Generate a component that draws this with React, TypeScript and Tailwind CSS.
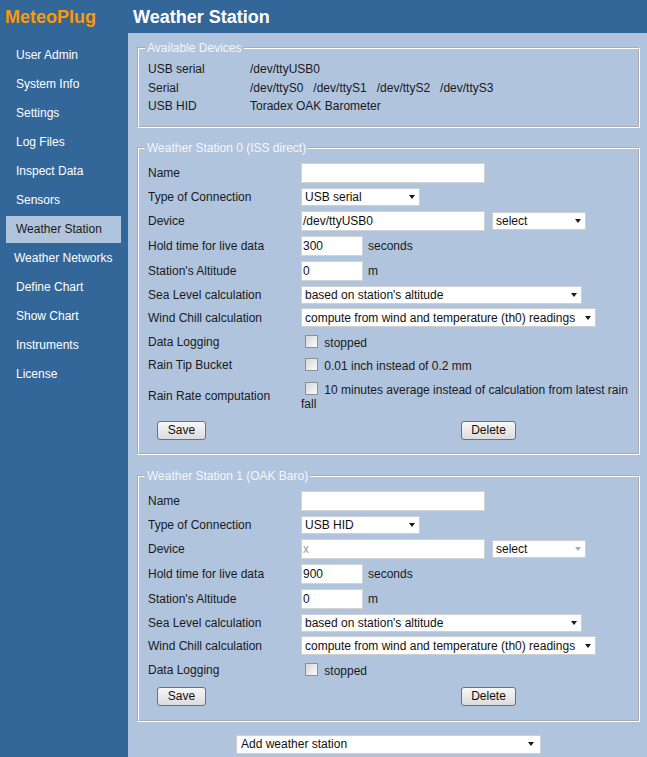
import React from "react";

const NAV = [
  "User Admin",
  "System Info",
  "Settings",
  "Log Files",
  "Inspect Data",
  "Sensors",
  "Weather Station",
  "Weather Networks",
  "Define Chart",
  "Show Chart",
  "Instruments",
  "License",
];

function Select({
  value,
  className,
  disabled,
}: {
  value: string;
  className: string;
  disabled?: boolean;
}) {
  return (
    <div
      className={`flex items-center justify-between bg-white border border-[#cfcfcf] pl-[3px] pr-[4px] ${className}`}
    >
      <span className="text-[12px] leading-[14px] text-[#111] whitespace-nowrap">{value}</span>
      <span
        className={`w-0 h-0 border-l-[3.5px] border-r-[3.5px] border-t-[4px] border-l-transparent border-r-transparent ${
          disabled ? "border-t-[#a9a9a9]" : "border-t-[#1a1a1a]"
        }`}
      />
    </div>
  );
}

function Input({
  value,
  className,
  placeholder,
}: {
  value?: string;
  className: string;
  placeholder?: string;
}) {
  return (
    <div
      className={`h-[20px] flex items-center bg-white border border-[#d3d3d3] pl-[1px] text-[12px] leading-[14px] ${className}`}
    >
      {value ? (
        <span className="text-[#111]">{value}</span>
      ) : placeholder ? (
        <span className="text-[#9a9a9a]">{placeholder}</span>
      ) : null}
    </div>
  );
}

function Checkbox() {
  return (
    <span className="inline-block w-[13px] h-[13px] ml-[4px] mr-[3px] [vertical-align:-1px] border border-[#8e8e8e] bg-linear-to-br from-[#d6d6d6] to-[#fcfcfc]" />
  );
}

function Button({ label, className }: { label: string; className: string }) {
  return (
    <button
      className={`h-[19px] flex items-center justify-center border border-[#707070] rounded-[3px] bg-linear-to-b from-[#f7f7f7] to-[#dcdcdc] text-[12px] leading-[14px] text-[#111] ${className}`}
    >
      {label}
    </button>
  );
}

function Row({
  label,
  h,
  children,
}: {
  label: string;
  h: string;
  children?: React.ReactNode;
}) {
  return (
    <div className={`flex items-center ${h}`}>
      <div className="w-[153px] shrink-0 text-[12px] leading-[14px] text-[#1a1a1a]">{label}</div>
      <div className="flex-1 flex items-center">{children}</div>
    </div>
  );
}

function Station({
  title,
  type,
  device,
  devicePlaceholder,
  selectDisabled,
  hold,
  rain,
  last,
}: {
  title: string;
  type: string;
  device?: string;
  devicePlaceholder?: string;
  selectDisabled?: boolean;
  hold: string;
  rain?: boolean;
  last?: boolean;
}) {
  return (
    <fieldset
      className={`border-2 [border-style:groove] border-white px-[6px] ${last ? "mt-[14px]" : "mt-[13px]"}`}
    >
      <legend className="px-[2px] text-[12px] leading-[14px] text-[#f4f7fb]">{title}</legend>
      <div className={`pl-[3px] pt-[6px] ${last ? "pb-[11px]" : "pb-[10px]"}`}>
        <Row label="Name" h="h-[24px]">
          <Input className="w-[184px]" />
        </Row>
        <Row label="Type of Connection" h="h-[24px]">
          <Select value={type} className="w-[119px] h-[18px]" />
        </Row>
        <Row label="Device" h="h-[24px]">
          <Input className="w-[184px]" value={device} placeholder={devicePlaceholder} />
          <Select value="select" className="ml-[7px] w-[94px] h-[18px]" disabled={selectDisabled} />
        </Row>
        <Row label="Hold time for live data" h="h-[26px]">
          <Input className="w-[62px]" value={hold} />
          <span className="ml-[5px] text-[12px] leading-[14px] text-[#1a1a1a]">seconds</span>
        </Row>
        <Row label="Station's Altitude" h="h-[24px]">
          <Input className="w-[62px]" value="0" />
          <span className="ml-[5px] text-[12px] leading-[14px] text-[#1a1a1a]">m</span>
        </Row>
        <Row label="Sea Level calculation" h="h-[24px]">
          <Select value="based on station's altitude" className="w-[281px] h-[18px]" />
        </Row>
        <Row label="Wind Chill calculation" h="h-[22px]">
          <Select
            value="compute from wind and temperature (th0) readings"
            className="w-[295px] h-[19px]"
          />
        </Row>
        <Row label="Data Logging" h={last ? "h-[27px]" : "h-[26px]"}>
          <div className="text-[12px] leading-[14px] text-[#1a1a1a] pt-[1px]">
            <Checkbox /> stopped
          </div>
        </Row>
        {rain && (
          <>
            <Row label="Rain Tip Bucket" h="h-[20px]">
              <div className="text-[12px] leading-[14px] text-[#1a1a1a] pt-[1px]">
                <Checkbox /> 0.01 inch instead of 0.2 mm
              </div>
            </Row>
            <Row label="Rain Rate computation" h="h-[43px]">
              <div className="text-[12px] leading-[14px] text-[#1a1a1a] pr-[2px]">
                <Checkbox /> 10 minutes average instead of calculation from latest rain fall
              </div>
            </Row>
          </>
        )}
        <div className="flex items-center h-[25px]">
          <div className="w-[153px] shrink-0">
            <Button label="Save" className="ml-[9px] w-[49px]" />
          </div>
          <Button label="Delete" className="ml-[160px] w-[55px]" />
        </div>
      </div>
    </fieldset>
  );
}

export default function App() {
  return (
    <div className="flex w-[647px] h-[757px] overflow-hidden font-['Liberation_Sans',Arial,sans-serif]">
      <div className="w-[128px] shrink-0 bg-[#336699]">
        <div className="h-[33px] flex items-center pl-[5px] pt-[1px] text-[18px] font-bold text-[#ff9900]">
          MeteoPlug
        </div>
        <nav className="pt-[8.5px] flex flex-col gap-[2px]">
          {NAV.map((n) => {
            const active = n === "Weather Station";
            return (
              <div
                key={n}
                className={`h-[27px] ml-[6px] w-[115px] flex items-center text-[12px] leading-[14px] ${
                  n === "Weather Networks" ? "pl-[8px]" : "pl-[10px]"
                } ${active ? "bg-[#b0c4de] text-[#1a1a1a]" : "text-white"}`}
              >
                {n}
              </div>
            );
          })}
        </nav>
      </div>
      <div className="flex-1 flex flex-col">
        <div className="h-[33px] shrink-0 bg-[#336699] flex items-center pl-[5px] pt-[1px] text-[18px] font-bold text-white">
          Weather Station
        </div>
        <div className="flex-1 bg-[#b0c4de] pl-[9px] pr-[7px] pt-[8px]">
          <fieldset className="border-2 [border-style:groove] border-white px-[6px]">
            <legend className="px-[2px] text-[12px] leading-[14px] text-[#f4f7fb]">
              Available Devices
            </legend>
            <div className="pl-[3px] pt-[5px] pb-[10px] text-[12px] leading-[18.5px] text-[#1a1a1a]">
              <div className="flex">
                <div className="w-[102px] shrink-0">USB serial</div>
                <div>/dev/ttyUSB0</div>
              </div>
              <div className="flex">
                <div className="w-[102px] shrink-0">Serial</div>
                <div className="whitespace-pre">
                  {"/dev/ttyS0\u00a0\u00a0\u00a0/dev/ttyS1\u00a0\u00a0\u00a0/dev/ttyS2\u00a0\u00a0\u00a0/dev/ttyS3"}
                </div>
              </div>
              <div className="flex">
                <div className="w-[102px] shrink-0">USB HID</div>
                <div>Toradex OAK Barometer</div>
              </div>
            </div>
          </fieldset>
          <Station
            title="Weather Station 0 (ISS direct)"
            type="USB serial"
            device="/dev/ttyUSB0"
            hold="300"
            rain
          />
          <Station
            title="Weather Station 1 (OAK Baro)"
            type="USB HID"
            devicePlaceholder="x"
            selectDisabled
            hold="900"
            last
          />
          <div className="mt-[13px] flex justify-center">
            <Select value="Add weather station" className="w-[305px] h-[19px] pl-[4px] pr-[6px]" />
          </div>
        </div>
      </div>
    </div>
  );
}
